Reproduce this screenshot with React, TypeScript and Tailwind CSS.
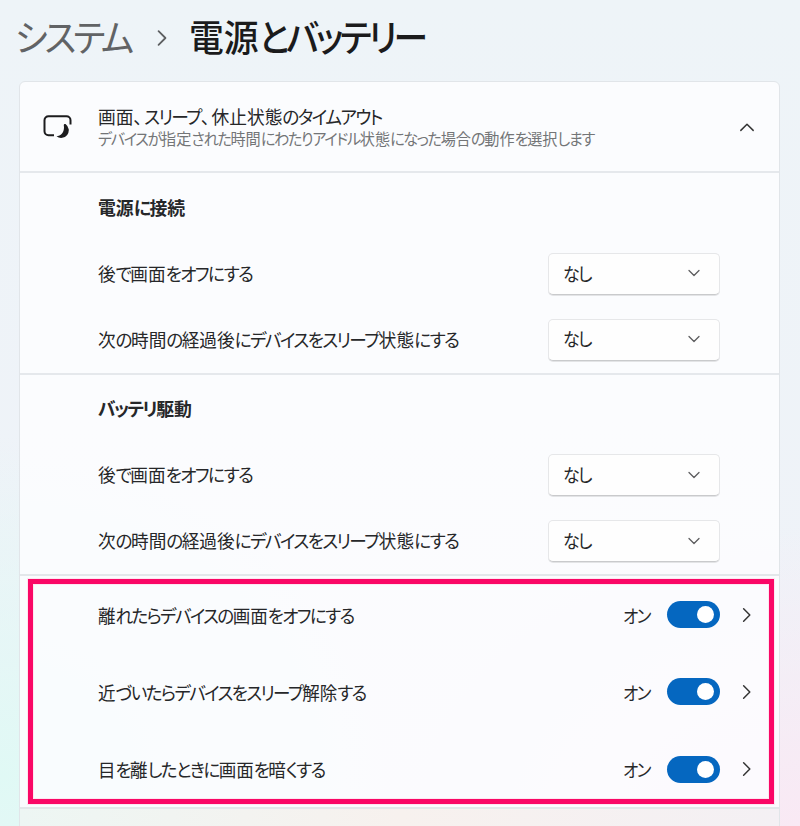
import type { ReactNode } from "react";
import { useState } from "react";

const dropdownSections = [
    {
        title: "電源に接続",
        rows: ["後で画面をオフにする", "次の時間の経過後にデバイスをスリープ状態にする"],
    },
    {
        title: "バッテリ駆動",
        rows: ["後で画面をオフにする", "次の時間の経過後にデバイスをスリープ状態にする"],
    },
];

const presenceRows = [
    "離れたらデバイスの画面をオフにする",
    "近づいたらデバイスをスリープ解除する",
    "目を離したときに画面を暗くする",
];

// Kana is set tighter than kanji, like in a proportional UI font
function Jp({ children, scale = "scale-x-[0.945]" }: { children: string; scale?: string }) {
    const runs = children.match(/、|[\u3040-\u30ff]+|[^\u3001\u3040-\u30ff]+/g) ?? [];
    return (
        <span className={`inline-block origin-left whitespace-nowrap ${scale}`}>
            {runs.map((run, i) => {
                if (run === "、") return <span key={i} className="mr-[0.1em]">{run}</span>;
                return /^[\u3040-\u30ff]/.test(run) ? (
                    <span key={i} className="tracking-[-0.09em]">{run}</span>
                ) : (
                    <span key={i}>{run}</span>
                );
            })}
        </span>
    );
}

function Chevron({ className, points }: { className: string; points: string }) {
    return (
        <svg className={className} viewBox="0 0 16 16" fill="none" stroke="currentColor" strokeWidth="1.3" strokeLinecap="round" strokeLinejoin="round">
            <polyline points={points} />
        </svg>
    );
}

function ScreenSleepIcon() {
    return (
        <svg className="h-[26px] w-[30px] text-[#1c1c1e]" viewBox="0 0 30 26" fill="none">
            <path d="M12 21.2H6.500a4 4 0 0 1-4-4V6.200a4 4 0 0 1 4-4h18a4 4 0 0 1 4 4v4.300" stroke="currentColor" strokeWidth="2" />
            <path d="M23.800 10.200a7.600 7.600 0 1 1-9.300 12.100c4.900 0 8.400-4.800 7.300-10.900-.2-.9.800-1.700 2-1.200z" fill="currentColor" />
        </svg>
    );
}

function Dropdown() {
    return (
        <button className="flex h-[42px] w-[172px] items-center justify-between rounded-[5px] border border-[#e6e7e9] border-b-[#c9cacc] bg-[#fefefe] pr-[17px] pb-px pl-[14px] shadow-[0_1px_0_#e3e4e6]">
            <span className="text-[18.500px]"><Jp scale="scale-x-[0.92]">なし</Jp></span>
            <Chevron className="h-4 w-4 text-[#5d5d5f]" points="3,5.5 8,10.5 13,5.5" />
        </button>
    );
}

function Toggle() {
    const [on, setOn] = useState(true);
    return (
        <div className="flex items-center">
            <span className="mr-[15px] pt-px text-[18px]"><Jp scale="scale-x-[0.92]">{on ? "オン" : "オフ"}</Jp></span>
            <button
                onClick={() => setOn(!on)}
                className={`flex h-[27px] w-[53px] items-center rounded-full px-[6px] ${on ? "justify-end bg-[#0567c0]" : "justify-start bg-gray-400"}`}
            >
                <span className="h-[17px] w-[17px] rounded-full bg-white" />
            </button>
        </div>
    );
}

function Section({ children }: { children: ReactNode }) {
    return <section className="border-t-2 border-[#e5e8ec] pr-[59px] pl-[78px]">{children}</section>;
}

export default function App() {
    return (
        <div className="h-[826px] w-[800px] overflow-hidden bg-[radial-gradient(ellipse_400px_340px_at_0%_94%,#e0f9f5_0%,transparent_100%),radial-gradient(ellipse_420px_300px_at_100%_100%,#f9e9f4_0%,transparent_100%),linear-gradient(#eef4f8,#eff2f8)] font-['Noto_Sans_CJK_JP',sans-serif] text-[#262729] [font-feature-settings:'palt']">
            <header className="flex h-[81px] items-center pb-[9px] pl-[15px]">
                <span className="w-[136px] text-[37px] leading-[50px] text-[#616365]"><Jp scale="scale-x-[0.955]">システム</Jp></span>
                <Chevron className="mt-[4px] h-[22px] w-[22px] text-[#5d5f61]" points="5.500,3 10.500,8 5.500,13" />
                <h1 className="ml-[16px] text-[37px] leading-[50px] font-medium text-[#1b1b1c]"><Jp scale="scale-x-[0.94]">電源とバッテリー</Jp></h1>
            </header>

            <main className="ml-[19px] h-[760px] w-[761px] rounded-t-[6px] border border-[#e1e5e9] bg-[#fdfdff]/85">
                <div className="flex h-[89px] items-center pr-[23px] pl-[22px]">
                    <ScreenSleepIcon />
                    <div className="ml-[26px] flex-1 pb-px">
                        <p className="text-[18.670px] leading-[23px]"><Jp scale="scale-x-[0.95]">画面、スリープ、休止状態のタイムアウト</Jp></p>
                        <p className="text-[15.500px] leading-[22px] text-[#737577]"><Jp scale="scale-x-[0.978]">デバイスが指定された時間にわたりアイドル状態になった場合の動作を選択します</Jp></p>
                    </div>
                    <Chevron className="h-[18px] w-[18px] text-[#333]" points="2.500,11 8,5.500 13.500,11" />
                </div>

                {dropdownSections.map((section) => (
                    <Section key={section.title}>
                        <h2 className="flex h-[68px] items-center pt-px text-[18.500px] font-bold"><Jp scale="scale-x-[0.965]">{section.title}</Jp></h2>
                        {section.rows.map((row) => (
                            <div key={row} className="flex h-[65.750px] items-center justify-between">
                                <span className="pb-[2px] text-[18.670px]"><Jp>{row}</Jp></span>
                                <Dropdown />
                            </div>
                        ))}
                    </Section>
                ))}

                <div className="h-[235px] border-y-2 border-[#e3e7ea] px-[8px] py-[3px]">
                    <div className="h-full w-[746px] border-[5px] border-[#fa0766] shadow-[0_0_0_1px_#fde6f1,inset_0_0_0_1px_#fde6f1]">
                        {presenceRows.map((row) => (
                            <div key={row} className="flex h-[77.300px] items-center pr-[13px] pl-[65px] first:-mt-[8px]">
                                <span className="flex-1 text-[18.670px]"><Jp scale="scale-x-[0.938]">{row}</Jp></span>
                                <Toggle />
                                <Chevron className="ml-[18px] h-[18px] w-[18px] text-[#333]" points="5,2.500 10.500,8 5,13.500" />
                            </div>
                        ))}
                    </div>
                </div>
                <div className="h-6 bg-linear-to-r from-[#edf6f3] via-[#f7f1ee] to-[#f4f0f4]" />
            </main>
        </div>
    );
}
